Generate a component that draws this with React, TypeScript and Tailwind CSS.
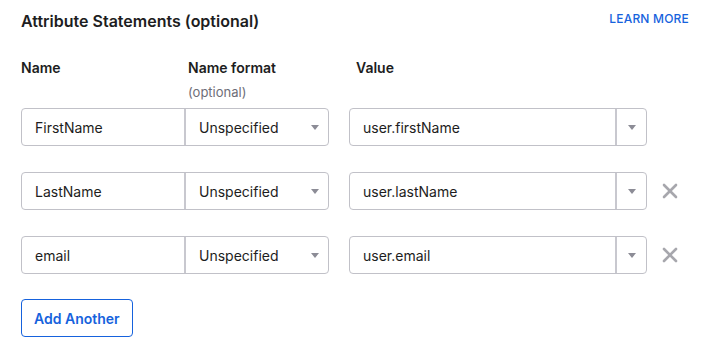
import { X } from 'lucide-react'

const rows = [
  { name: 'FirstName', value: 'user.firstName', removable: false },
  { name: 'LastName', value: 'user.lastName', removable: true },
  { name: 'email', value: 'user.email', removable: true },
]

function Caret() {
  return (
    <svg width="8" height="5" viewBox="0 0 8 5" className="shrink-0">
      <path d="M0 0h8L4 5z" fill="#8c8c96" />
    </svg>
  )
}

export default function App() {
  return (
    <div
      className="w-[710px] h-[343px] bg-white px-[21px] pt-[11px] text-[#1d1d21]"
      style={{ fontFamily: 'Inter, "Liberation Sans", sans-serif' }}
    >
      <div className="flex items-center justify-between">
        <h2 className="text-[16px] font-semibold leading-[20px]">
          Attribute Statements (optional)
        </h2>
        <a className="-mt-[4px] text-[12px] font-medium tracking-[0.2px] text-[#1662dd]">
          LEARN MORE
        </a>
      </div>

      <div className="mt-[28px] flex text-[14px] font-semibold leading-[18px]">
        <div className="w-[167px]">Name</div>
        <div className="w-[168px]">
          Name format
          <div className="mt-[6px] text-[13px] font-normal text-[#6e6e78]">
            (optional)
          </div>
        </div>
        <div>Value</div>
      </div>

      <div className="mt-[7px] flex flex-col gap-[26px]">
        {rows.map((row) => (
          <div key={row.name} className="flex h-[38px] items-center text-[14px]">
            <div className="flex h-full w-[308px] rounded-[4px] border border-[#c1c1c8]">
              <div className="flex w-[164px] items-center border-r-2 border-[#c8c8cf] pl-[13px]">
                {row.name}
              </div>
              <div className="flex flex-1 items-center justify-between pl-[13px] pr-[9px]">
                Unspecified
                <Caret />
              </div>
            </div>
            <div className="ml-[20px] flex h-full w-[298px] rounded-[4px] border border-[#c1c1c8]">
              <div className="flex flex-1 items-center border-r-2 border-[#c8c8cf] pl-[13px]">
                {row.value}
              </div>
              <div className="flex w-[29px] items-center justify-center">
                <Caret />
              </div>
            </div>
            {row.removable && (
              <X className="ml-[11px] text-[#a7a7ad]" size={24} strokeWidth={2.6} />
            )}
          </div>
        ))}
      </div>

      <button className="mt-[25px] h-[38px] rounded-[4px] border border-[#1662dd] px-[12px] text-[14px] font-semibold text-[#1662dd]">
        Add Another
      </button>
    </div>
  )
}
